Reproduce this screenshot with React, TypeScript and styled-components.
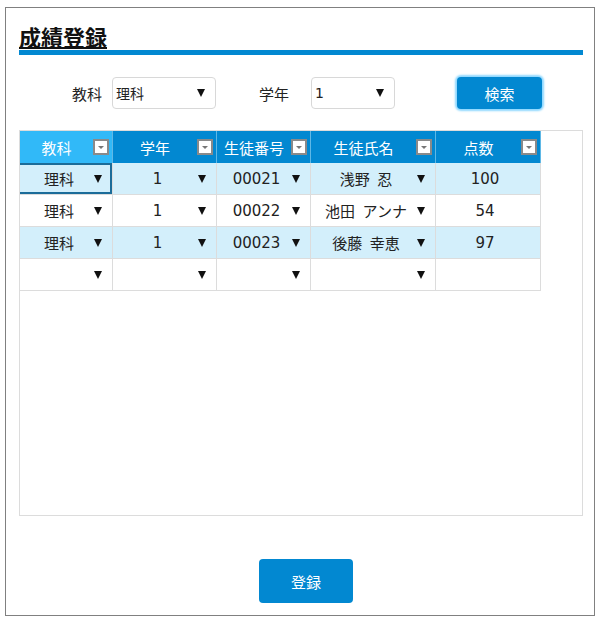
import React from 'react';
import styled, { createGlobalStyle } from 'styled-components';

const COLUMNS = [
  { key: 'subject', label: '教科', width: 93, dropdown: true },
  { key: 'grade', label: '学年', width: 104, dropdown: true },
  { key: 'studentNo', label: '生徒番号', width: 94, dropdown: true },
  { key: 'name', label: '生徒氏名', width: 125, dropdown: true },
  { key: 'score', label: '点数', width: 105, dropdown: false },
];

const ROWS: Record<string, string>[] = [
  { subject: '理科', grade: '1', studentNo: '00021', name: '浅野\u2002忍', score: '100' },
  { subject: '理科', grade: '1', studentNo: '00022', name: '池田\u2002アンナ', score: '54' },
  { subject: '理科', grade: '1', studentNo: '00023', name: '後藤\u2002幸恵', score: '97' },
  { subject: '', grade: '', studentNo: '', name: '', score: '' },
];

const GRID_TEMPLATE = COLUMNS.map(c => `${c.width}px`).join(' ');
const TEXT_FONT = "'DejaVu Sans', 'Noto Sans CJK JP', sans-serif";

const GlobalStyle = createGlobalStyle`
  html, body {
    margin: 0;
    padding: 0;
    background: #ffffff;
    font-family: 'Noto Sans CJK JP', 'Noto Sans', sans-serif;
    color: #222;
  }
  * { box-sizing: border-box; }
`;

const Page = styled.div`
  padding: 7px 0 0 5px;
`;

const Frame = styled.div`
  width: 590px;
  height: 609px;
  border: 1px solid #808080;
  padding: 0 11px 0 13px;
  display: flex;
  flex-direction: column;
`;

const Title = styled.h1`
  margin: 14px 0 0;
  height: 28px;
  font-size: 22px;
  line-height: 28px;
  font-weight: 700;
  text-decoration: underline;
  text-decoration-thickness: 2px;
  text-underline-offset: 1px;
  color: #111;
`;

const TitleBar = styled.div`
  height: 5px;
  background: #0288d1;
`;

const FilterRow = styled.div`
  display: flex;
  align-items: center;
  height: 32px;
  margin-top: 22px;
  padding-left: 53px;
`;

const FilterLabel = styled.span<{ $offset: number }>`
  margin-left: ${({ $offset }) => $offset}px;
  margin-right: 10px;
  font-size: 15px;
  color: #222;
`;

const SelectBox = styled.div<{ $width: number; $offset?: number }>`
  width: ${({ $width }) => $width}px;
  margin-left: ${({ $offset }) => $offset ?? 0}px;
  height: 32px;
  border: 1px solid #d8d8d8;
  border-radius: 4px;
  display: flex;
  align-items: center;
  justify-content: space-between;
  padding: 0 10px 0 3px;
  font-family: ${TEXT_FONT};
  font-size: 14px;
  color: #222;
`;

const Arrow = () => (
  <svg width="8" height="8" viewBox="0 0 8 8">
    <polygon points="0,0 8,0 4,8" fill="#111" />
  </svg>
);

const PrimaryButton = styled.button<{ $width: number; $height: number; $glow?: boolean; $offset?: number }>`
  width: ${({ $width }) => $width}px;
  height: ${({ $height }) => $height}px;
  margin-left: ${({ $offset }) => $offset ?? 0}px;
  border: none;
  border-radius: 4px;
  background: #0288d1;
  color: #fff;
  font-family: inherit;
  font-size: 15px;
  cursor: pointer;
  box-shadow: ${({ $glow }) => ($glow ? '0 0 2px 2px #8fd8ff' : 'none')};
`;

const GridPanel = styled.div`
  margin-top: 21px;
  height: 386px;
  border: 1px solid #dcdcdc;
`;

const GridRow = styled.div`
  display: grid;
  grid-template-columns: ${GRID_TEMPLATE};
`;

const HeaderCell = styled.div<{ $active: boolean }>`
  height: 32px;
  background: ${({ $active }) => ($active ? '#31b9f8' : '#0288d1')};
  border-right: 1px solid #5fb8e6;
  color: #fff;
  font-size: 15px;
  display: flex;
  align-items: center;
  padding: 0 3px 0 0;
`;

const HeaderText = styled.span`
  flex: 1;
  text-align: center;
`;

const FilterButton = styled.span`
  width: 16px;
  height: 16px;
  background: #fff;
  border: 2px solid #8a8a8a;
  display: flex;
  align-items: center;
  justify-content: center;

  &::after {
    content: '';
    border-left: 3px solid transparent;
    border-right: 3px solid transparent;
    border-top: 3px solid #777;
  }
`;

const BodyCell = styled.div<{ $alt: boolean; $selected: boolean }>`
  height: 32px;
  background: ${({ $alt }) => ($alt ? '#d3effb' : '#ffffff')};
  border-right: 1px solid #dcdcdc;
  border-bottom: 1px solid #dcdcdc;
  box-shadow: ${({ $selected }) =>
    $selected ? 'inset 0 2px 0 #1b6c99, inset -2px 0 0 #1b6c99, inset 0 -2px 0 #1b6c99' : 'none'};
  font-family: ${TEXT_FONT};
  font-size: 15px;
  color: #222;
  display: flex;
  align-items: center;
  padding: 0 10px 0 4px;
`;

const CellText = styled.span`
  flex: 1;
  text-align: center;
  white-space: nowrap;
`;

const Footer = styled.div`
  display: flex;
  justify-content: center;
  padding-left: 10px;
  margin-top: 43px;
`;

export default function App() {
  return (
    <Page>
      <GlobalStyle />
      <Frame>
        <Title>成績登録</Title>
        <TitleBar />

        <FilterRow>
          <FilterLabel $offset={0}>教科</FilterLabel>
          <SelectBox $width={104}>
            <span>理科</span>
            <Arrow />
          </SelectBox>
          <FilterLabel $offset={43}>学年</FilterLabel>
          <SelectBox $width={84} $offset={12}>
            <span>1</span>
            <Arrow />
          </SelectBox>
          <PrimaryButton $width={85} $height={32} $glow $offset={62}>
            検索
          </PrimaryButton>
        </FilterRow>

        <GridPanel>
          <GridRow>
            {COLUMNS.map((col, i) => (
              <HeaderCell key={col.key} $active={i === 0}>
                <HeaderText>{col.label}</HeaderText>
                <FilterButton />
              </HeaderCell>
            ))}
          </GridRow>
          {ROWS.map((row, r) => (
            <GridRow key={r}>
              {COLUMNS.map((col, c) => (
                <BodyCell key={col.key} $alt={r % 2 === 0} $selected={r === 0 && c === 0}>
                  <CellText>{row[col.key]}</CellText>
                  {col.dropdown && <Arrow />}
                </BodyCell>
              ))}
            </GridRow>
          ))}
        </GridPanel>

        <Footer>
          <PrimaryButton $width={94} $height={44}>登録</PrimaryButton>
        </Footer>
      </Frame>
    </Page>
  );
}
